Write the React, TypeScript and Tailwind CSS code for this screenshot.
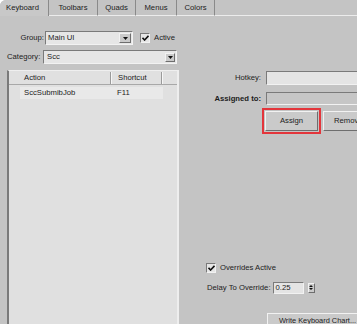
const sunken = "border border-t-[#7a7a7a] border-l-[#7a7a7a] border-r-[#f2f2f2] border-b-[#f2f2f2]";
const raised = "border border-t-[#f2f2f2] border-l-[#f2f2f2] border-r-[#6e6e6e] border-b-[#6e6e6e] bg-[#cacaca]";

function DownArrow({ className }: { className: string }) {
  return (
    <div className={`${raised} ${className} flex items-center justify-center`}>
      <svg width="5" height="3" viewBox="0 0 5 3">
        <path d="M0 0 H5 L2.5 3 Z" fill="#111" />
      </svg>
    </div>
  );
}

function Check() {
  return (
    <div className={`${sunken} w-[10px] h-[10px] bg-[#e6e6e6] flex items-center justify-center`}>
      <svg width="7" height="6" viewBox="0 0 7 6">
        <path d="M0.5 2.8 L2.6 5 L6.5 0.8" stroke="#111" strokeWidth="1.6" fill="none" />
      </svg>
    </div>
  );
}

const tabs = [
  { label: "Keyboard", w: "w-[49px] pl-[6px]", active: true },
  { label: "Toolbars", w: "w-[49px] justify-center", active: false },
  { label: "Quads", w: "w-[38px] justify-center", active: false },
  { label: "Menus", w: "w-[41px] justify-center", active: false },
  { label: "Colors", w: "w-[38px] justify-center", active: false },
];

export default function App() {
  return (
    <div
      className="w-[357px] h-[324px] bg-[#c4c4c4] overflow-hidden rounded-tl-[6px] text-[7.7px] text-[#1c1c1c] flex flex-col"
      style={{ fontFamily: "'Liberation Sans', Arial, sans-serif" }}
    >
      {/* tab strip */}
      <div className="h-[16px] flex shrink-0">
        {tabs.map((t) => (
          <div
            key={t.label}
            className={`${t.w} h-full flex items-center border-r border-r-[#8a8a8a] ${
              t.active ? "bg-[#c8c8c8]" : "border-b border-b-[#ececec]"
            }`}
          >
            {t.label}
          </div>
        ))}
        <div className="flex-1 border-b border-b-[#ececec]" />
      </div>

      <div className="flex flex-1 min-h-0">
        {/* left column */}
        <div className="w-[180px] shrink-0 pl-[7px] pt-[15px] flex flex-col">
          <div className="flex items-center h-[14px]">
            <div className="w-[38px] text-right pr-[1px]">Group:</div>
            <div className={`${sunken} w-[88px] h-[14px] bg-[#e6e6e6] flex items-center pl-[2px]`}>
              <span className="flex-1">Main UI</span>
              <DownArrow className="w-[12px] h-[10px] mr-[1px]" />
            </div>
            <div className="ml-[7px]">
              <Check />
            </div>
            <span className="ml-[4px]">Active</span>
          </div>

          <div className="flex items-center h-[14px] mt-[5px]">
            <div className="w-[36px]">Category:</div>
            <div className={`${sunken} w-[134px] h-[14px] bg-[#e6e6e6] flex items-center pl-[3px]`}>
              <span className="flex-1">Scc</span>
              <DownArrow className="w-[10px] h-[9px] mr-[1px]" />
            </div>
          </div>

          <div className="mt-[6px] w-[172px] flex-1 bg-[#e0e0e0] border-l-2 border-l-[#7a7a7a] border-t border-t-[#efefef] border-r-2 border-r-[#eeeeee] pt-[1px]">
            <div className="flex h-[13px] border-b border-b-[#a8a8a8]">
              <div className="w-[102px] pl-[15px] flex items-center border-r border-r-[#9a9a9a]">Action</div>
              <div className="w-[51px] pl-[6px] flex items-center border-r border-r-[#9a9a9a] border-l border-l-[#f6f6f6]">Shortcut</div>
              <div className="flex-1 border-l border-l-[#f6f6f6]" />
            </div>
            <div className="flex h-[12px] mt-[2px] ml-[11px] w-[143px] bg-[#e9e9e9] items-center">
              <div className="w-[91px] pl-[4px]">SccSubmibJob</div>
              <div className="pl-[6px]">F11</div>
            </div>
          </div>
        </div>

        {/* right column */}
        <div className="flex-1 flex flex-col pt-[55px] min-w-0">
          <div className="grid grid-cols-[81px_110px] gap-x-[5px] gap-y-[7px] items-center">
            <div className="text-right">Hotkey:</div>
            <div className={`${sunken} h-[14px] bg-[#e4e4e4]`} />
            <div className="text-right font-bold">Assigned to:</div>
            <div className={`${sunken} h-[13px] bg-[#c6c6c6]`} />
          </div>

          <div className="flex items-center mt-[3px] ml-[82px]">
            <div className="border-2 border-[#e3353b] p-[1px]">
              <div className={`${raised} w-[53px] h-[20px] flex items-center justify-center`}>Assign</div>
            </div>
            <div className={`${raised} w-[60px] h-[20px] ml-[2px] flex items-center pl-[10px] shrink-0`}>Remove</div>
          </div>

          <div className="flex items-center mt-[128px] ml-[26px]">
            <Check />
            <span className="ml-[4px]">Overrides Active</span>
          </div>

          <div className="flex items-center mt-[8px] ml-[27px]">
            <span>Delay To Override:</span>
            <div className={`${sunken} w-[31px] h-[12px] bg-[#e4e4e4] ml-[2px] flex items-center pl-[2px]`}>0.25</div>
            <div className={`${raised} w-[7px] h-[10px] ml-[4px] flex flex-col items-center justify-center gap-[1px]`}>
              <svg width="4" height="2" viewBox="0 0 4 2">
                <path d="M0 2 H4 L2 0 Z" fill="#111" />
              </svg>
              <svg width="4" height="2" viewBox="0 0 4 2">
                <path d="M0 0 H4 L2 2 Z" fill="#111" />
              </svg>
            </div>
          </div>

          <div className="mt-[19px] ml-[87px]">
            <div className={`${raised} w-[100px] h-[16px] pl-[11px] pt-[1px] whitespace-nowrap text-[7.4px]`}>Write Keyboard Chart...</div>
          </div>
        </div>
      </div>
    </div>
  );
}
